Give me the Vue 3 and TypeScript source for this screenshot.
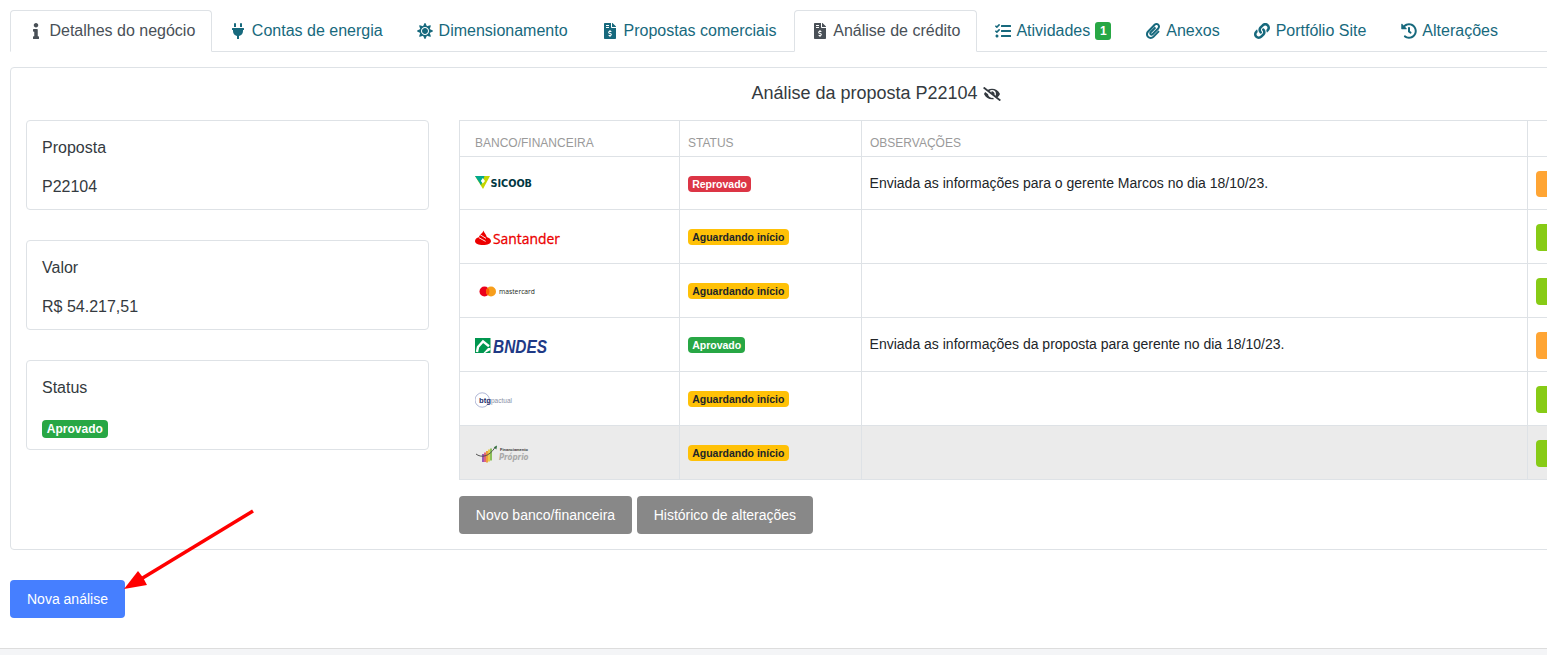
<script setup lang="ts">
interface Tab { label: string; icon: string; vb: string; active?: boolean; badge?: string }
interface Row { logo: string; status: string; kind: string; note: string; action: string; shade?: boolean; first?: boolean }

const dollar = 'M377 105L279.1 7c-4.5-4.5-10.6-7-17-7H256v128h128v-6.1c0-6.3-2.5-12.4-7-16.9zm-153 31V0H24C10.7 0 0 10.7 0 24v464c0 13.3 10.7 24 24 24h336c13.3 0 24-10.7 24-24V160H248c-13.2 0-24-10.8-24-24zM64 72c0-4.42 3.58-8 8-8h80c4.42 0 8 3.58 8 8v16c0 4.42-3.58 8-8 8H72c-4.42 0-8-3.58-8-8V72zm0 80v-16c0-4.42 3.58-8 8-8h80c4.42 0 8 3.58 8 8v16c0 4.42-3.58 8-8 8H72c-4.42 0-8-3.58-8-8zm144 263.88V440c0 4.42-3.58 8-8 8h-16c-4.42 0-8-3.58-8-8v-24.29c-11.29-.58-22.27-4.52-31.37-11.35-3.9-2.93-4.1-8.77-.57-12.14l11.75-11.21c2.77-2.64 6.89-2.76 10.13-.73 3.87 2.42 8.26 3.72 12.82 3.72h28.11c6.5 0 11.8-5.92 11.8-13.19 0-5.95-3.61-11.19-8.77-12.73l-45-13.5c-18.59-5.58-31.58-23.42-31.58-43.39 0-24.52 19.05-44.44 42.67-45.07V232c0-4.42 3.58-8 8-8h16c4.42 0 8 3.58 8 8v24.29c11.29.58 22.27 4.51 31.37 11.35 3.9 2.93 4.1 8.77.57 12.14l-11.75 11.21c-2.77 2.64-6.89 2.76-10.13.73-3.87-2.43-8.26-3.72-12.82-3.72h-28.11c-6.5 0-11.8 5.92-11.8 13.19 0 5.95 3.61 11.19 8.77 12.73l45 13.5c18.59 5.58 31.58 23.42 31.58 43.39 0 24.53-19.05 44.44-42.67 45.07z'

const tabs: Tab[] = [
  { label: 'Detalhes do negócio', active: true, vb: '0 0 192 512', icon: 'M20 424.229h20V279.771H20c-11.046 0-20-8.954-20-20V212c0-11.046 8.954-20 20-20h112c11.046 0 20 8.954 20 20v212.229h20c11.046 0 20 8.954 20 20V492c0 11.046-8.954 20-20 20H20c-11.046 0-20-8.954-20-20v-47.771c0-11.046 8.954-20 20-20zM96 0C56.235 0 24 32.235 24 72s32.235 72 72 72 72-32.235 72-72S135.764 0 96 0z' },
  { label: 'Contas de energia', vb: '0 0 384 512', icon: 'M320,32a32,32,0,0,0-64,0v96h64Zm48,128H16A16,16,0,0,0,0,176v32a16,16,0,0,0,16,16H32v32A160.07,160.07,0,0,0,160,412.8V512h64V412.8A160.07,160.07,0,0,0,352,256V224h16a16,16,0,0,0,16-16V176A16,16,0,0,0,368,160ZM128,32a32,32,0,0,0-64,0v96h64Z' },
  { label: 'Dimensionamento', vb: '0 0 512 512', icon: 'M256 160c-52.9 0-96 43.1-96 96s43.1 96 96 96 96-43.1 96-96-43.1-96-96-96zm246.4 80.5l-94.7-47.3 33.5-100.4c4.5-13.6-8.4-26.5-21.9-21.9l-100.4 33.5-47.4-94.8c-6.4-12.8-24.6-12.8-31 0l-47.3 94.7L92.7 70.8c-13.6-4.5-26.5 8.4-21.9 21.9l33.5 100.4-94.7 47.4c-12.8 6.4-12.8 24.6 0 31l94.7 47.3-33.5 100.5c-4.5 13.6 8.4 26.5 21.9 21.9l100.4-33.5 47.3 94.7c6.4 12.8 24.6 12.8 31 0l47.3-94.7 100.4 33.5c13.6 4.5 26.5-8.4 21.9-21.9l-33.5-100.4 94.7-47.3c13-6.5 13-24.7.2-31.1zm-155.9 106c-49.9 49.9-131.1 49.9-181 0-49.9-49.9-49.9-131.1 0-181 49.9-49.9 131.1-49.9 181 0 49.9 49.9 49.9 131.1 0 181z' },
  { label: 'Propostas comerciais', vb: '0 0 384 512', icon: dollar },
  { label: 'Análise de crédito', active: true, vb: '0 0 384 512', icon: dollar },
  { label: 'Atividades', badge: '1', vb: '0 0 512 512', icon: 'M139.61 35.5a12 12 0 0 0-17 0L58.93 98.81l-22.7-22.12a12 12 0 0 0-17 0L3.53 92.41a12 12 0 0 0 0 17l47.59 47.4a12.78 12.78 0 0 0 17.61 0l15.59-15.62L156.52 69a12.09 12.09 0 0 0 .09-17zm0 159.19a12 12 0 0 0-17 0l-63.68 63.72-22.7-22.1a12 12 0 0 0-17 0L3.53 252a12 12 0 0 0 0 17L51 316.5a12.77 12.77 0 0 0 17.6 0l15.7-15.69 72.2-72.22a12 12 0 0 0 .09-16.9zM64 368c-26.49 0-48.59 21.5-48.59 48S37.53 464 64 464a48 48 0 0 0 0-96zm432 16H208a16 16 0 0 0-16 16v32a16 16 0 0 0 16 16h288a16 16 0 0 0 16-16v-32a16 16 0 0 0-16-16zm0-320H208a16 16 0 0 0-16 16v32a16 16 0 0 0 16 16h288a16 16 0 0 0 16-16V80a16 16 0 0 0-16-16zm0 160H208a16 16 0 0 0-16 16v32a16 16 0 0 0 16 16h288a16 16 0 0 0 16-16v-32a16 16 0 0 0-16-16z' },
  { label: 'Anexos', vb: '0 0 448 512', icon: 'M43.246 466.142c-58.43-60.289-57.341-157.511 1.386-217.581L254.392 34c44.316-45.332 116.351-45.336 160.671 0 43.89 44.894 43.943 117.329 0 162.276L232.214 383.128c-29.855 30.537-78.633 30.111-107.982-.998-28.275-29.97-27.368-77.473 1.452-106.953l143.743-146.835c6.182-6.314 16.312-6.422 22.626-.241l22.861 22.379c6.315 6.182 6.422 16.312.241 22.626L171.427 319.927c-4.932 5.045-5.236 13.428-.648 18.292 4.372 4.634 11.245 4.711 15.688.165l182.849-186.851c19.613-20.062 19.613-52.725-.011-72.798-19.189-19.627-49.957-19.637-69.154 0L90.39 293.295c-34.763 35.56-35.299 93.12-1.191 128.313 34.01 35.093 88.985 35.137 123.058.286l172.06-175.999c6.177-6.319 16.307-6.433 22.626-.256l22.877 22.364c6.319 6.177 6.434 16.307.256 22.626l-172.06 175.998c-59.576 60.938-155.943 60.216-214.77-.485z' },
  { label: 'Portfólio Site', vb: '0 0 512 512', icon: 'M326.612 185.391c59.747 59.809 58.927 155.698.36 214.59-.11.12-.24.25-.36.37l-67.2 67.2c-59.27 59.27-155.699 59.262-214.96 0-59.27-59.26-59.27-155.7 0-214.96l37.106-37.106c9.84-9.84 26.786-3.3 27.294 10.606.648 17.722 3.826 35.527 9.69 52.721 1.986 5.822.567 12.262-3.783 16.612l-13.087 13.087c-28.026 28.026-28.905 73.66-1.155 101.96 28.024 28.579 74.086 28.749 102.325.51l67.2-67.19c28.191-28.191 28.073-73.757 0-101.83-3.701-3.694-7.429-6.564-10.341-8.569a16.037 16.037 0 0 1-6.947-12.606c-.396-10.567 3.348-21.456 11.698-29.806l21.054-21.055c5.521-5.521 14.182-6.199 20.584-1.731a152.482 152.482 0 0 1 20.522 17.197zM467.547 44.449c-59.261-59.262-155.69-59.27-214.96 0l-67.2 67.2c-.12.12-.25.25-.36.37-58.566 58.892-59.387 154.781.36 214.59a152.454 152.454 0 0 0 20.521 17.196c6.402 4.468 15.064 3.789 20.584-1.731l21.054-21.055c8.35-8.35 12.094-19.239 11.698-29.806a16.037 16.037 0 0 0-6.947-12.606c-2.912-2.005-6.64-4.875-10.341-8.569-28.073-28.073-28.191-73.639 0-101.83l67.2-67.19c28.239-28.239 74.3-28.069 102.325.51 27.75 28.3 26.872 73.934-1.155 101.96l-13.087 13.087c-4.35 4.35-5.769 10.79-3.783 16.612 5.864 17.194 9.042 34.999 9.69 52.721.509 13.906 17.454 20.446 27.294 10.606l37.106-37.106c59.271-59.259 59.271-155.699.001-214.959z' },
  { label: 'Alterações', vb: '0 0 512 512', icon: 'M504 255.531c.253 136.64-111.18 248.372-247.82 248.468-59.015.042-113.223-20.53-155.822-54.911-11.077-8.94-11.905-25.541-1.839-35.607l11.267-11.267c8.609-8.609 22.353-9.551 31.891-1.984C173.062 425.135 212.781 440 256 440c101.705 0 184-82.311 184-184 0-101.705-82.311-184-184-184-48.814 0-93.149 18.969-126.068 49.932l50.754 50.754c10.08 10.08 2.941 27.314-11.313 27.314H24c-8.837 0-16-7.163-16-16V38.627c0-14.254 17.234-21.393 27.314-11.314l49.372 49.372C129.209 34.136 189.552 8 256 8c136.81 0 247.747 110.78 248 247.531zm-180.912 78.784l9.823-12.63c8.138-10.463 6.253-25.542-4.21-33.679L288 256.349V152c0-13.255-10.745-24-24-24h-16c-13.255 0-24 10.745-24 24v135.651l65.409 50.874c10.463 8.137 25.541 6.253 33.679-4.21z' },
]

const rows: Row[] = [
  { logo: 'sicoob', status: 'Reprovado', kind: 'danger', note: 'Enviada as informações para o gerente Marcos no dia 18/10/23.', action: 'orange', first: true },
  { logo: 'santander', status: 'Aguardando início', kind: 'warning', note: '', action: 'green' },
  { logo: 'mastercard', status: 'Aguardando início', kind: 'warning', note: '', action: 'green' },
  { logo: 'bndes', status: 'Aprovado', kind: 'success', note: 'Enviada as informações da proposta para gerente no dia 18/10/23.', action: 'orange' },
  { logo: 'btg', status: 'Aguardando início', kind: 'warning', note: '', action: 'green' },
  { logo: 'proprio', status: 'Aguardando início', kind: 'warning', note: '', action: 'green', shade: true },
]
</script>

<template>
  <div class="page">
    <main class="main">
      <nav class="tabs">
        <a v-for="t in tabs" :key="t.label" class="tab" :class="{ active: t.active }">
          <svg class="ico" :viewBox="t.vb" aria-hidden="true"><path :d="t.icon" fill="currentColor" /></svg>
          <span>{{ t.label }}</span>
          <b v-if="t.badge" class="count">{{ t.badge }}</b>
        </a>
      </nav>

      <section class="panel">
        <h2 class="title">
          Análise da proposta P22104
          <svg class="eye" viewBox="0 0 640 512" aria-hidden="true"><path fill="currentColor" d="M320 400c-75.85 0-137.25-58.71-142.9-133.11L72.2 185.82c-13.79 17.3-26.48 35.59-36.72 55.59a32.35 32.35 0 0 0 0 29.19C89.71 376.41 197.07 448 320 448c26.91 0 52.87-4 77.89-10.46L346 397.39a144.13 144.13 0 0 1-26 2.61zm313.82 58.1l-110.55-85.44a331.25 331.25 0 0 0 81.25-102.07 32.35 32.35 0 0 0 0-29.19C550.29 135.59 442.93 64 320 64a308.15 308.15 0 0 0-147.32 37.7L45.46 3.37A16 16 0 0 0 23 6.18L3.37 31.45A16 16 0 0 0 6.18 53.9l588.36 454.73a16 16 0 0 0 22.46-2.81l19.64-25.27a16 16 0 0 0-2.82-22.45zm-183.72-142l-39.3-30.38A94.75 94.75 0 0 0 416 256a94.76 94.76 0 0 0-121.31-92.21A47.65 47.65 0 0 1 304 192a46.64 46.64 0 0 1-1.54 10l-73.61-56.89A142.31 142.31 0 0 1 320 112a143.92 143.92 0 0 1 144 144c0 21.63-5.29 41.79-13.9 60.11z" /></svg>
        </h2>

        <div class="columns">
          <aside class="side">
            <div class="info"><div class="lbl">Proposta</div><div class="val">P22104</div></div>
            <div class="info"><div class="lbl">Valor</div><div class="val">R$ 54.217,51</div></div>
            <div class="info"><div class="lbl">Status</div><div class="val"><span class="tag big success">Aprovado</span></div></div>
          </aside>

          <div class="content">
            <table class="grid">
              <colgroup><col class="c1" /><col class="c2" /><col class="c3" /><col class="c4" /></colgroup>
              <thead>
                <tr><th class="first">Banco/Financeira</th><th>Status</th><th>Observações</th><th></th></tr>
              </thead>
              <tbody>
                <tr v-for="r in rows" :key="r.logo" :class="{ shade: r.shade, short: r.first }">
                  <td class="first">
                    <svg class="logo" viewBox="0 0 90 24" role="img" :aria-label="r.logo">
                      <g v-if="r.logo === 'sicoob'">
                        <polygon points="0,5 15,5 8,18" fill="#c4d600" />
                        <polygon points="0,5 9.5,5 6,14.5 5,12.4" fill="#00a88f" />
                        <polygon points="7.8,7 10,10 7.8,12.5 5.8,10" fill="#fff" />
                        <text x="15.5" y="15.6" class="t-sicoob" textLength="41.5" lengthAdjust="spacingAndGlyphs">SICOOB</text>
                      </g>
                      <g v-else-if="r.logo === 'santander'">
                        <path d="M8.4 5.5C8.8 7.6 11.4 9.4 11.8 12 14 12.7 16 14 16 16 16 18.6 12.5 20 8 20 3.5 20 0 18.6 0 16 0 14.2 1.8 12.8 4 12.1 4.3 10.4 5.6 9.2 6.8 8.2 7.5 7.5 8.2 6.6 8.4 5.5Z" fill="#ec0000" />
                        <path d="M3.8 12.6C6 14 8.4 15 10.6 16.4M5.2 9.8C7 11 9 12 11 13.4" stroke="#fff" stroke-width=".9" fill="none" />
                        <text x="18" y="19.3" class="t-santander" textLength="67" lengthAdjust="spacingAndGlyphs">Santander</text>
                      </g>
                      <g v-else-if="r.logo === 'mastercard'">
                        <circle cx="9.5" cy="12.5" r="5" fill="#eb001b" />
                        <circle cx="16" cy="12.5" r="5" fill="#f79e1b" />
                        <path d="M12.75 8.7a5 5 0 0 1 0 7.6 5 5 0 0 1 0-7.6Z" fill="#ff5f00" />
                        <text x="24" y="14.8" class="t-master" textLength="36" lengthAdjust="spacingAndGlyphs">mastercard</text>
                      </g>
                      <g v-else-if="r.logo === 'bndes'">
                        <rect x="0" y="5" width="15.5" height="15" fill="#00964f" />
                        <path d="M2 19 L3 14 L8 8.4 L14 13.2" stroke="#fff" stroke-width="2.4" fill="none" />
                        <polygon points="13,15 15.5,15 15.5,17 10,20 8.5,20" fill="#fff" />
                        <text x="18" y="19.6" class="t-bndes" textLength="54" lengthAdjust="spacingAndGlyphs">BNDES</text>
                      </g>
                      <g v-else-if="r.logo === 'btg'">
                        <circle cx="7.2" cy="13" r="7.2" fill="none" stroke="#8d97c4" stroke-width=".7" />
                        <text x="4" y="15.6" class="t-btg" textLength="12" lengthAdjust="spacingAndGlyphs">btg</text>
                        <text x="16" y="15.6" class="t-pactual" textLength="21" lengthAdjust="spacingAndGlyphs">pactual</text>
                      </g>
                      <g v-else>
                        <rect x="7" y="13" width="2" height="8" fill="#9b59b6" />
                        <rect x="9" y="11.5" width="2" height="9.5" fill="#e0647a" />
                        <rect x="11" y="10" width="2" height="11.5" fill="#eda13c" />
                        <rect x="13" y="8.5" width="2" height="12" fill="#e8cf4d" />
                        <rect x="15" y="7.5" width="2" height="12" fill="#8cbf5a" />
                        <path d="M1 13C6 17 14 16 20 6.5" stroke="#444" stroke-width=".9" fill="none" />
                        <polygon points="22,4.5 18.8,6.2 21.4,8.6" fill="#2d6b3a" />
                        <text x="25" y="9.6" class="t-fin" textLength="28" lengthAdjust="spacingAndGlyphs">Financiamento</text>
                        <text x="24" y="18.7" class="t-proprio" textLength="29.5" lengthAdjust="spacingAndGlyphs">Próprio</text>
                      </g>
                    </svg>
                  </td>
                  <td><span class="tag" :class="r.kind">{{ r.status }}</span></td>
                  <td class="note">{{ r.note }}</td>
                  <td class="nudge"><button class="act" :class="r.action" :aria-label="r.status"></button></td>
                </tr>
              </tbody>
            </table>
            <div class="actions">
              <button class="btn grey">Novo banco/financeira</button>
              <button class="btn grey">Histórico de alterações</button>
            </div>
          </div>
        </div>
      </section>

      <button class="btn blue">Nova análise</button>
    </main>
    <footer class="foot"></footer>

    <svg class="arrow" viewBox="0 0 1547 655" aria-hidden="true">
      <line x1="253" y1="511" x2="141" y2="579" stroke="#f00" stroke-width="3.5" />
      <polygon points="124,589 138,571 143,577.5 147,585" fill="#f00" />
    </svg>
  </div>
</template>

<style>
html, body { margin: 0; background: #fff; overflow: hidden; }
</style>

<style scoped>
.page {
  position: relative;
  width: 1547px;
  height: 655px;
  overflow: hidden;
  display: flex;
  flex-direction: column;
  font-family: "Liberation Sans", Arial, sans-serif;
  font-size: 16px;
  color: #343a40;
}
.main { padding: 10px 0 0 10px; flex: none; }

.tabs {
  display: flex;
  height: 42px;
  box-sizing: border-box;
  border-bottom: 1px solid #dee2e6;
}
.tab {
  display: flex;
  align-items: center;
  box-sizing: border-box;
  height: 42px;
  padding: 0 15.55px 0 16px;
  border: 1px solid transparent;
  border-radius: 4px 4px 0 0;
  color: #17697d;
  line-height: 24px;
  white-space: nowrap;
}
.tab:first-child { padding-right: 16.1px; }
.tab:nth-child(4) { padding-right: 16.3px; }
.tab:nth-child(6) { padding-right: 14.6px; }
.tab.active {
  color: #495057;
  background: #fff;
  border-color: #dee2e6 #dee2e6 #fff;
}
.ico { width: 18px; height: 16px; margin-right: 4.45px; flex: none; }
.count {
  margin-left: 5px;
  width: 16px;
  height: 18px;
  border-radius: 3px;
  background: #28a745;
  color: #fff;
  font-size: 12px;
  line-height: 18px;
  text-align: center;
}

.panel {
  box-sizing: border-box;
  width: 1732px;
  height: 483px;
  margin-top: 15px;
  padding: 13px 15px 0;
  border: 1px solid #dee2e6;
  border-radius: 4px;
}
.title {
  margin: 0 0 15px;
  font-size: 18px;
  font-weight: 400;
  line-height: 24px;
  text-align: center;
  color: #343a40;
}
.eye { width: 18px; height: 14px; vertical-align: -2px; }

.columns { display: flex; gap: 30px; align-items: flex-start; }
.side { width: 403px; flex: none; display: flex; flex-direction: column; gap: 30px; }
.info {
  box-sizing: border-box;
  height: 90px;
  padding: 15px 15px 0;
  border: 1px solid #dee2e6;
  border-radius: 4px;
  line-height: 24px;
}
.val { margin-top: 15px; }

.content { flex: 1; min-width: 0; }
.grid {
  width: 1268px;
  table-layout: fixed;
  border-collapse: collapse;
  font-size: 14px;
  color: #212529;
}
.c1 { width: 220px; }
.c2 { width: 182px; }
.c3 { width: 666px; }
.c4 { width: 200px; }
.grid th, .grid td { border: 1px solid #dee2e6; padding: 0 8px; }
.grid th {
  height: 36px;
  box-sizing: border-box;
  padding-bottom: 6px;
  vertical-align: bottom;
  text-align: left;
  font-size: 12px;
  line-height: 14px;
  font-weight: 400;
  text-transform: uppercase;
  color: #9a9a9a;
}
.grid .first { padding-left: 15px; padding-right: 0; }
.grid td { height: 54px; box-sizing: border-box; vertical-align: middle; }
.grid tr.short td { height: 53px; }
.grid td.nudge { padding-top: 2px; }
.grid td.note { padding-bottom: 1px; padding-left: 7.6px; }
.shade td { background: #ebebeb; }
.logo { display: block; width: 90px; height: 24px; }

.t-sicoob { font: 700 10.5px "DejaVu Sans", sans-serif; fill: #003641; }
.t-santander { font: 400 14.5px "Open Sans", sans-serif; fill: #ec0000; stroke: #ec0000; stroke-width: .3px; }
.t-master { font: 400 7.5px "Open Sans", sans-serif; fill: #231f20; }
.t-bndes { font: italic 700 18px "Liberation Sans", sans-serif; fill: #1f3a86; }
.t-btg { font: 700 8px "Liberation Sans", sans-serif; fill: #1f2d6b; }
.t-pactual { font: 400 6.5px "Liberation Sans", sans-serif; fill: #8a8fa8; }
.t-fin { font: 700 4px "Liberation Sans", sans-serif; fill: #333; }
.t-proprio { font: italic 700 8px "DejaVu Sans", sans-serif; fill: #a9a9a9; }

.tag {
  display: inline-block;
  padding: 0 4.2px;
  height: 16px;
  line-height: 16px;
  border-radius: 4px;
  font-size: 10.5px;
  font-weight: 700;
  white-space: nowrap;
  vertical-align: middle;
}
.tag.big { font-size: 12px; height: 18px; line-height: 18px; padding: 0 4.8px; vertical-align: -1px; }
.danger { background: #dc3545; color: #fff; }
.warning { background: #ffc107; color: #212529; }
.success { background: #28a745; color: #fff; }

.act { display: block; width: 80px; height: 27px; border: 0; padding: 0; border-radius: 4px; }
.short .act { height: 26px; }
.orange { background: #ffa534; }
.green { background: #87cb16; }

.actions { display: flex; gap: 5px; margin-top: 16px; }
.btn {
  display: block;
  height: 38px;
  padding: 0 16.8px;
  border: 0;
  border-radius: 4px;
  font-family: inherit;
  font-size: 14px;
  color: #fff;
}
.grey { background: #888; }
.blue { margin-top: 30px; background: #467fff; padding: 0 17px; }

.foot {
  flex: 1;
  margin-top: 30px;
  background: #f4f5f7;
  border-top: 1px solid #ddd;
}
.arrow { position: absolute; inset: 0; width: 1547px; height: 655px; pointer-events: none; }
</style>
